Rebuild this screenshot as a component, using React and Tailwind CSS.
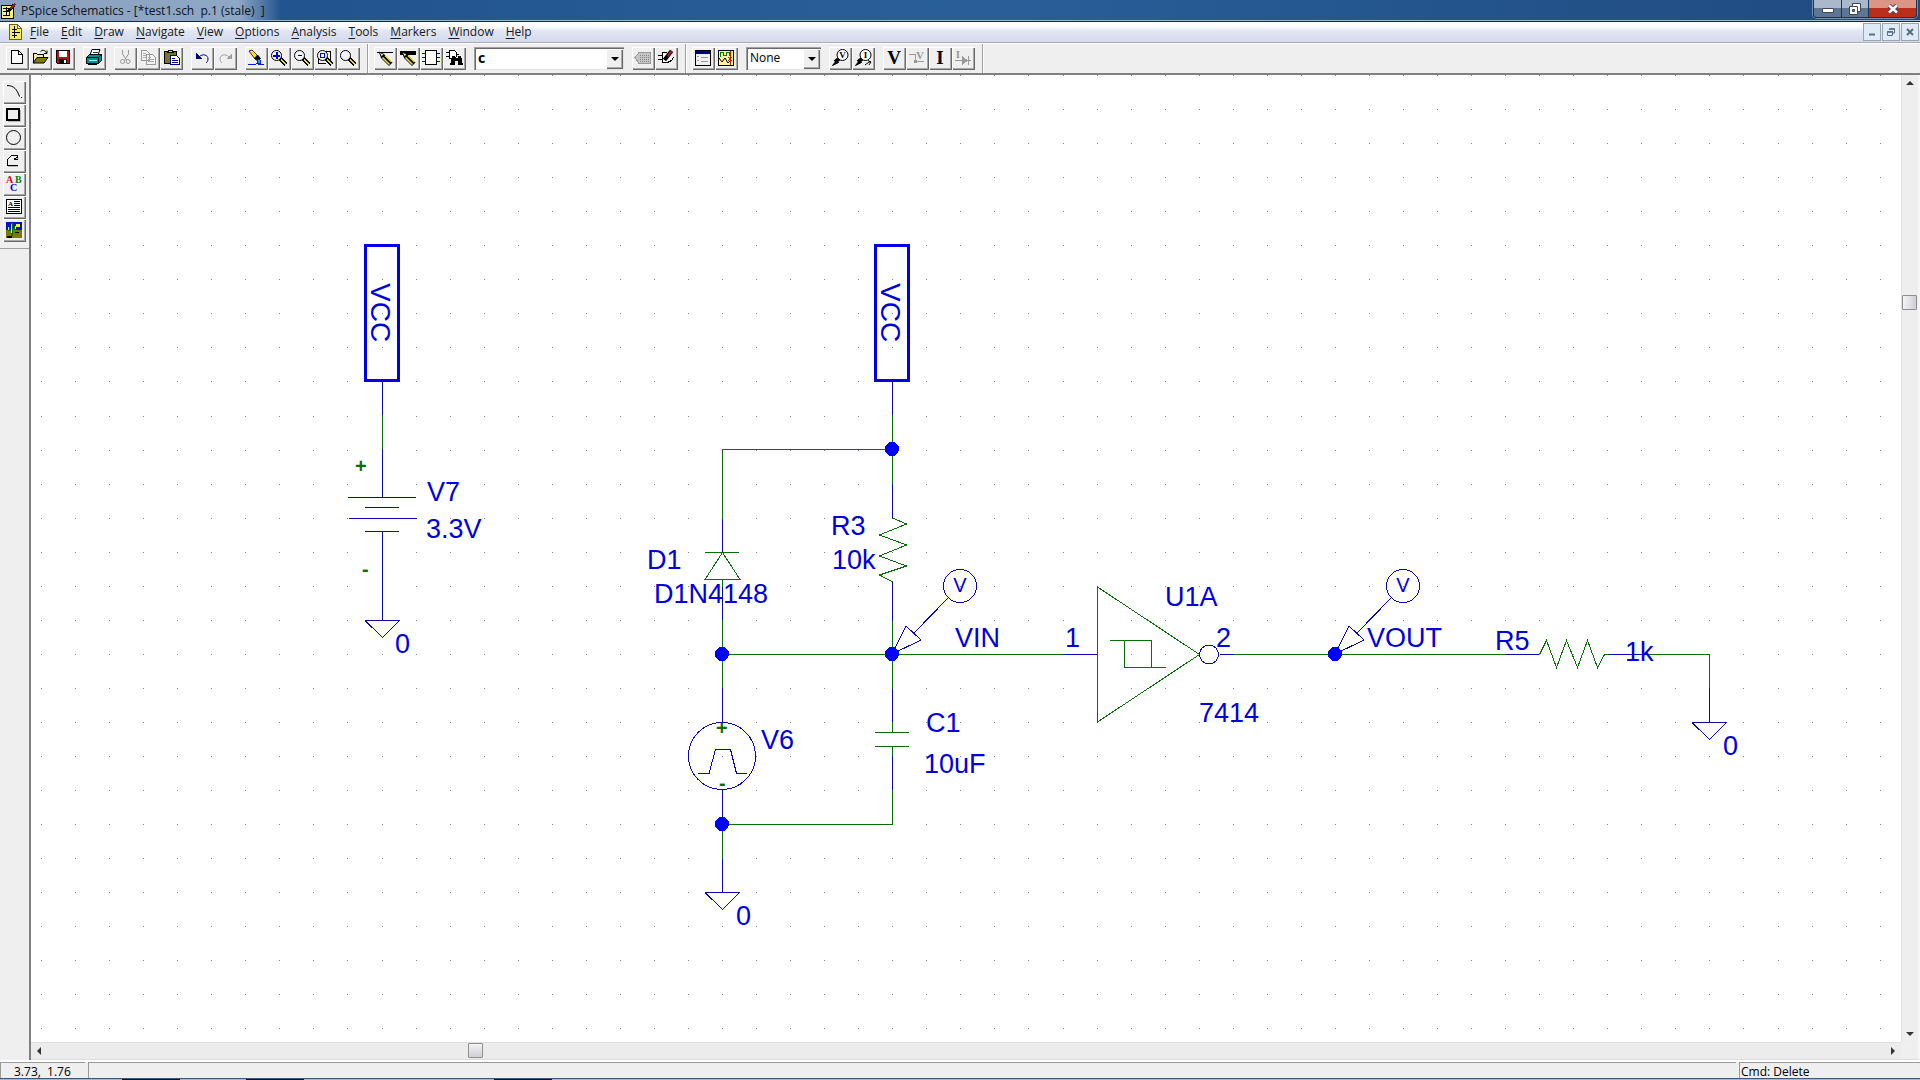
const UI_FONT = "font-['Open_Sans','Noto_Sans',sans-serif]";

const MENUS = ["File", "Edit", "Draw", "Navigate", "View", "Options", "Analysis", "Tools", "Markers", "Window", "Help"];

const GREEN = "#0b6e0b";
const WIRE = "#0a0aa8";
const LABEL = "#0000dc";

/* ---------- toolbar icons, all on a 23x23 grid ---------- */

function Icon({ children }) {
    return (
        <svg viewBox="0 0 23 23" className="block h-[23px] w-[23px]" shapeRendering="crispEdges" fill="none" stroke="#000" aria-hidden="true">
            {children}
        </svg>
    );
}

function Magnifier({ children }) {
    return (
        <Icon>
            <path d="M12 11.5l6 6" stroke="#000" strokeWidth="4" />
            <path d="M13 12.5l5 5" stroke="#e6dc50" strokeWidth="2" />
            <circle cx="8.5" cy="8.5" r="5" fill="#f4f4ff" shapeRendering="auto" />
            {children}
        </Icon>
    );
}

function Pencil({ thick }) {
    return (
        <Icon>
            <path d="M3 5.5h16" strokeWidth={thick ? 4 : 1} />
            <path d="M5 5l2 6 8 8 3.500-3.500-8-8z" fill="#000" stroke="none" shapeRendering="auto" />
            <path d="M8.500 10.500l7 7M11 8.500l6.500 6.500" stroke="#e6dc50" strokeWidth="1.600" shapeRendering="auto" />
            <path d="M5 5l5 2.500-2.500 2z" fill="#fff" strokeWidth=".8" shapeRendering="auto" />
        </Icon>
    );
}

function Probe({ letter, children }) {
    return (
        <Icon>
            <path d="M3.500 18.500l4-5 2 2z" fill="#000" shapeRendering="auto" />
            <path d="M6 15l5-4" strokeWidth="4" shapeRendering="auto" />
            <circle cx="13.500" cy="8" r="5.500" fill="#fff" shapeRendering="auto" />
            <text x="13.500" y="11" textAnchor="middle" fill="#000" stroke="none" className="font-['Liberation_Serif',serif] text-[9px] font-bold">{letter}</text>
            {children}
        </Icon>
    );
}

const icons = {
    new: (
        <Icon>
            <path d="M5.5 3.5h7l4 4v9h-11z" fill="#fff" />
            <path d="M12.5 3.5v4h4" />
        </Icon>
    ),
    open: (
        <Icon>
            <path d="M4.5 15.5v-9h3l1 1h6v3" fill="#f2ec9a" />
            <path d="M4 16l4-5.5h11L15 16z" fill="#7d7d00" shapeRendering="auto" />
            <path d="M11.5 4.5c2-2 5-1.5 6 1.5M18 3.5v3h-3" shapeRendering="auto" />
        </Icon>
    ),
    save: (
        <Icon>
            <path d="M4.5 3.5h13v13h-12l-1-1z" fill="#b01414" />
            <path d="M7 4h8v6H7z" fill="#fff" stroke="none" />
            <path d="M7 12h8v5H7z" fill="#000" stroke="none" />
            <path d="M12 13h2v3h-2z" fill="#fff" stroke="none" />
        </Icon>
    ),
    print: (
        <Icon>
            <path d="M7 8l2-5.5h8L15 8z" fill="#fff" shapeRendering="auto" />
            <path d="M9.5 5.5h5" strokeWidth=".8" />
            <path d="M3.5 10.5l3-3h12v6l-3 3h-12z" fill="#0c8c8c" shapeRendering="auto" />
            <path d="M3.5 10.5h12v6M15.5 10.5l3-3" shapeRendering="auto" />
            <path d="M5.5 13.5h8" stroke="#7ff" />
            <path d="M5 17.5h9" />
        </Icon>
    ),
    cut: (
        <Icon>
            <path d="M8.5 3v4l4 6M14.5 3v4l-4 6" stroke="#999" shapeRendering="auto" />
            <circle cx="8.5" cy="14.5" r="2" stroke="#999" shapeRendering="auto" />
            <circle cx="14" cy="14.5" r="2" stroke="#999" shapeRendering="auto" />
        </Icon>
    ),
    copy: (
        <Icon>
            <path d="M4.5 3.5h5l3 3v7h-8zM9.5 7.5h6l3 3v7h-9z" fill="#f3f3f3" stroke="#999" />
            <path d="M6 6.5h3M6 8.5h3M6 10.5h3M11 10.5h3M11 12.5h6M11 14.5h6" stroke="#aaa" />
        </Icon>
    ),
    paste: (
        <Icon>
            <path d="M4.5 4.5h12v12h-12z" fill="#77752a" />
            <path d="M7.5 5.5l1-2h4l1 2z" fill="#e8e080" />
            <path d="M10.5 8.5h6l3 3v6h-9z" fill="#fff" stroke="#00008c" />
            <path d="M12 11.5h3M12 13.5h6M12 15.5h6" stroke="#00008c" />
        </Icon>
    ),
    undo: (
        <Icon>
            <path d="M5 6v6h6z" fill="#00007c" stroke="none" />
            <path d="M8 10c4-4 9-2 9 2 0 2-1 3-2 4" stroke="#00007c" shapeRendering="auto" />
        </Icon>
    ),
    redo: (
        <Icon>
            <path d="M18 6v6h-6z" fill="#a0a0a0" stroke="none" />
            <path d="M15 10c-4-4-9-2-9 2 0 2 1 3 2 4" stroke="#a0a0a0" shapeRendering="auto" />
        </Icon>
    ),
    redraw: (
        <Icon>
            <path d="M4 4l3-1 6 6-3 3z" fill="#ffe21a" strokeWidth=".8" shapeRendering="auto" />
            <path d="M9.5 11.5l3-3.500 3 3.500-2.500 2.500z" fill="#000" shapeRendering="auto" />
            <path d="M12.500 12.500l2.500.5v3h-3z" fill="#18a0f0" stroke="#0018e0" />
            <path d="M3 17.5h8M13 17.5h6" stroke="#0018e0" />
        </Icon>
    ),
    zoomIn: <Magnifier><path d="M5 8.500h7M8.500 5v7" stroke="#0000d8" strokeWidth="2" /></Magnifier>,
    zoomOut: <Magnifier><path d="M7 8.500h4" stroke="#000080" /></Magnifier>,
    zoomArea: (
        <Magnifier>
            <path d="M6.500 6.500h4v4h-4z" stroke="#0000d8" fill="#fff" />
            <path d="M12 4.500h4v9M4.500 12v4h7" />
        </Magnifier>
    ),
    zoomFit: <Magnifier />,
    wire: <Pencil />,
    bus: <Pencil thick />,
    block: (
        <Icon>
            <path d="M5.5 3.5h11v14h-11z" fill="#fff" />
            <path d="M2 6.5h3M2 10.5h3M2 14.5h3M17 6.5h3M17 10.5h3M17 14.5h3" stroke="#0000c8" />
        </Icon>
    ),
    find: (
        <Icon>
            <path d="M3 5.5h3M3 9.5h3M6.5 3.5h4c4 0 4 8 0 8h-4zM13 7.5h3" fill="#fff" />
            <path d="M9 9h3v2h3V9h3l2 9h-5v-4h-3v4H7z" fill="#000" stroke="none" />
        </Icon>
    ),
    tag: (
        <Icon>
            <path d="M3 10.5l4-5h11v11H7z" fill="#c4c4c4" stroke="#999" />
            <path d="M8 8.5h9M8 10.5h9M8 12.5h9M8 14.5h9" stroke="#888" strokeDasharray="1 1" />
        </Icon>
    ),
    editSymbol: (
        <Icon>
            <path d="M3 8.5h4M3 12.5h4M7.5 5.5v10h3c6 0 7-3 8-5M7 5.5h5" fill="#fff" />
            <path d="M9.5 13l7-9" stroke="#000" strokeWidth="4" shapeRendering="auto" />
            <path d="M12.5 9.500l4.500-5.500" stroke="#a01428" strokeWidth="2.500" shapeRendering="auto" />
        </Icon>
    ),
    setup: (
        <Icon>
            <path d="M3.5 3.5h15v15h-15z" fill="#f0f0f0" />
            <path d="M4 5.5h14" stroke="#00008c" strokeWidth="3" />
            <path d="M5 9.5h2M9 10.5h7M5 13.5h2M9 14.5h7" stroke="#999" />
        </Icon>
    ),
    simulate: (
        <Icon>
            <path d="M3.5 3.5h15v15h-15z" fill="#fff79a" />
            <path d="M5 9.5V5.5h3v3h3v-3h3v3" stroke="#008000" />
            <path d="M4 11l3 4 3-4 3 5 3-3" shapeRendering="auto" />
            <path d="M15.5 4v14M13 10l4 4M17 10l-4 4" stroke="#c81414" />
        </Icon>
    ),
    probeV: <Probe letter="V" />,
    probeI: <Probe letter="I"><path d="M13 18l4-3h2M16 13.500l3 1.500-2 3" shapeRendering="auto" /></Probe>,
    voltage: (
        <Icon>
            <text x="11" y="17" textAnchor="middle" fill="#000" stroke="none" className="font-['Liberation_Serif',serif] text-[19px] font-bold">V</text>
        </Icon>
    ),
    netVoltage: (
        <Icon>
            <path d="M3 7.5h6v7h9M7.5 14.5h3" stroke="#999" />
            <circle cx="9.5" cy="14.5" r="1.5" fill="#999" stroke="none" />
            <text x="14" y="12" textAnchor="middle" fill="#999" stroke="none" className="font-['Liberation_Serif',serif] text-[11px] font-bold">V</text>
        </Icon>
    ),
    current: (
        <Icon>
            <text x="11" y="17" textAnchor="middle" fill="#000" stroke="none" className="font-['Liberation_Serif',serif] text-[19px] font-bold">I</text>
        </Icon>
    ),
    deviceCurrent: (
        <Icon>
            <path d="M3 13.5h16M16.5 9v9" stroke="#999" />
            <path d="M10 9l6 4.5-6 4.5z" fill="#999" stroke="none" />
            <text x="6" y="11" textAnchor="middle" fill="#999" stroke="none" className="font-['Liberation_Serif',serif] text-[11px] font-bold">I</text>
        </Icon>
    ),
    arc: <Icon><path d="M4 4.5c7 0 10 4 12.5 11M18 16.5h1" shapeRendering="auto" /></Icon>,
    box: (
        <Icon>
            <path d="M5 17.5h12.5V6" stroke="#bbb" />
            <path d="M4 5h12v11H4z" strokeWidth="2" />
        </Icon>
    ),
    circle: <Icon><circle cx="10.500" cy="10.500" r="7" shapeRendering="auto" /></Icon>,
    polyline: (
        <Icon>
            <path d="M5 16.500h10M12 8.500h4" stroke="#bbb" />
            <path d="M15 15.500H4.500v-6l4-4H14v2l-3 1.500h1l3 1" />
        </Icon>
    ),
    text: (
        <Icon>
            <g stroke="none" className="font-['Liberation_Serif',serif] text-[10px] font-bold">
                <text x="3" y="10" fill="#d01010">A</text>
                <text x="12" y="10" fill="#0a7a14">B</text>
                <text x="7" y="18" fill="#0000d0">C</text>
            </g>
        </Icon>
    ),
    textBox: (
        <Icon>
            <path d="M3.5 3.5h15v14h-15z" fill="#fff" />
            <path d="M11 5.5h6M11 7.5h6M11 9.5h6M5 11.5h12M5 13.5h12M5 15.5h12" />
            <text x="5" y="10" fill="#000" stroke="none" className="font-['Liberation_Serif',serif] text-[7px] font-bold">A</text>
        </Icon>
    ),
    picture: (
        <Icon>
            <path d="M3 3h16v8H3z" fill="#0014c8" stroke="none" />
            <path d="M3 11h16v8H3z" fill="#7d7a00" stroke="none" />
            <circle cx="15" cy="6.5" r="2" fill="#ffe84a" stroke="none" />
            <path d="M9 4v13M6 8v3h3M12 7v3h-3" stroke="#0a6e14" strokeWidth="2" />
            <path d="M8.500 5v9M5.500 8v3M12.500 7v3" stroke="#b8f0b8" />
            <path d="M4 17h5v2H4zM12 13h4v1h-4z" fill="#000" stroke="none" />
        </Icon>
    ),
};

function ToolButton({ name, label, disabled }) {
    return (
        <button
            type="button"
            aria-label={label}
            disabled={disabled}
            className="h-[23px] w-[23px] bg-[#efefef] shadow-[inset_1px_1px_#fff,inset_-1px_-1px_#696969,inset_-2px_-2px_#a8a8a8]"
        >
            {icons[name]}
        </button>
    );
}

function ToolGroup({ items }) {
    return (
        <div className="flex">
            {items.map(([name, label, disabled]) => (
                <ToolButton key={name} name={name} label={label} disabled={disabled} />
            ))}
        </div>
    );
}

function Combo({ label, value, className, textClass }) {
    return (
        <div className={`relative h-[23px] bg-white shadow-[inset_1px_1px_#a0a0a0,inset_2px_2px_#696969,inset_-1px_-1px_#e3e3e3] ${className}`}>
            <select aria-label={label} className={`block h-[21px] w-full appearance-none bg-transparent pl-1 text-black outline-none ${textClass}`}>
                <option>{value}</option>
            </select>
            <span className="pointer-events-none absolute top-[2px] right-px bottom-px flex w-[17px] items-center justify-center bg-[#efefef] shadow-[inset_1px_1px_#fff,inset_-1px_-1px_#696969,inset_-2px_-2px_#a8a8a8]">
                <svg viewBox="0 0 8 4" className="h-1 w-2" aria-hidden="true"><path d="M0 0h8L4 4z" /></svg>
            </span>
        </div>
    );
}

function ToolSection({ children }) {
    return (
        <div className="flex items-center gap-2 border-r border-[#a0a0a0] pr-[7px] pl-[6px] shadow-[1px_0_#fff]">
            {children}
        </div>
    );
}

function AppIcon() {
    return (
        <svg viewBox="0 0 16 16" className="h-4 w-4 shrink-0" shapeRendering="crispEdges" aria-hidden="true">
            <path d="M1 2h12v13H1z" fill="#f4ee8a" stroke="#000" />
            <path d="M3 5h7M3 8h4M9 8v5M3 12h7M6 4v9" stroke="#000" />
            <path d="M8 9l6-7" stroke="#000" strokeWidth="3" />
            <path d="M10 6l5-5" stroke="#8c1c1c" strokeWidth="2.500" />
        </svg>
    );
}

function DocIcon() {
    return (
        <svg viewBox="0 0 14 16" className="h-4 w-[14px] shrink-0" shapeRendering="crispEdges" aria-hidden="true">
            <path d="M1 .5h8l4 4v11H1z" fill="#f6ee58" stroke="#6a6400" />
            <path d="M9 .5v4h4" fill="#fff" stroke="#6a6400" />
            <path d="M6.5 2v12M4 5.5h5M4 8.5h8M4 11.5h5" stroke="#000" />
        </svg>
    );
}

function TitleBar() {
    const cap = "flex h-full items-center justify-center border-r border-[#1d3450] last:border-r-0";
    return (
        <header className="flex h-[22px] shrink-0 items-start border-b border-[#14284a] bg-linear-to-r from-[#1f4f8a] via-[#295f99] to-[#1f4a80] shadow-[inset_0_-1px_#9db6d4]">
            <div className="flex h-[21px] items-center gap-[5px] bg-linear-to-r from-[#8aa2bd] via-[#8ea7c6] via-85% to-transparent pr-4">
                <AppIcon />
                <h1 className="text-xs whitespace-pre text-[#0c1420]">PSpice Schematics - [*test1.sch  p.1 (stale)  ]</h1>
            </div>
            <div className="mr-[3px] ml-auto flex h-[18px] overflow-hidden rounded-b border border-t-0 border-[#1d3450] shadow-[0_0_0_1px_#ffffff60]">
                <button type="button" aria-label="Minimize" className={`${cap} w-7 bg-linear-to-b from-[#a9b8ca] from-45% to-[#5d7694] to-50%`}>
                    <svg viewBox="0 0 12 5" className="mt-1 h-[5px] w-3"><path d="M.5.5h11v4H.5z" fill="#fff" stroke="#445" /></svg>
                </button>
                <button type="button" aria-label="Restore" className={`${cap} w-[27px] bg-linear-to-b from-[#a9b8ca] from-45% to-[#5d7694] to-50%`}>
                    <svg viewBox="0 0 12 12" className="h-3 w-3" fill="#fff" stroke="#445"><path d="M3.5.5h8v8h-8z" /><path d="M.5 3.5h8v8h-8z" /><path d="M3.5 6.5h2v2h-2z" fill="#6a829e" /></svg>
                </button>
                <button type="button" aria-label="Close" className={`${cap} w-[47px] bg-linear-to-b from-[#dc9486] from-45% to-[#b8301c] to-50%`}>
                    <svg viewBox="0 0 12 10" className="h-[10px] w-3"><path d="M2 1.5l8 7M10 1.5l-8 7" stroke="#445" strokeWidth="4.5" /><path d="M2 1.5l8 7M10 1.5l-8 7" stroke="#fff" strokeWidth="2.5" /></svg>
                </button>
            </div>
        </header>
    );
}

function MenuBar() {
    const mdi = "flex h-[18px] w-[18px] items-center justify-center border border-[#9aa5b4] bg-[#dfeaf7]";
    return (
        <nav className="flex h-[21px] shrink-0 items-center border-b border-[#a9acb8] bg-linear-to-b from-white from-20% via-[#e2e6f3] via-45% to-[#d4daec] pl-2">
            <DocIcon />
            <ul className="ml-2 flex gap-3">
                {MENUS.map((m) => (
                    <li key={m}>
                        <button type="button" className="block text-xs text-[#1a1a1a]"><u className="underline-offset-2">{m[0]}</u>{m.slice(1)}</button>
                    </li>
                ))}
            </ul>
            <div className="mr-px ml-auto flex gap-px">
                <button type="button" aria-label="Minimize document" className={mdi}>
                    <svg viewBox="0 0 8 8" className="h-2 w-2"><path d="M1 6.5h6" stroke="#5a6c80" strokeWidth="2" /></svg>
                </button>
                <button type="button" aria-label="Restore document" className={mdi}>
                    <svg viewBox="0 0 8 8" className="h-2 w-2" fill="none" stroke="#5a6c80"><path d="M2.5 2V1h5v4H6M.5 3.5h5v4h-5z" /><path d="M2 1h6M0 4h6" strokeWidth="1.5" /></svg>
                </button>
                <button type="button" aria-label="Close document" className={mdi}>
                    <svg viewBox="0 0 8 8" className="h-2 w-2"><path d="M1 1l6 6M7 1L1 7" stroke="#5a6c80" strokeWidth="2" /></svg>
                </button>
            </div>
        </nav>
    );
}

function Toolbar() {
    return (
        <div role="toolbar" aria-label="Standard" className="flex h-8 shrink-0 border-t border-b-2 border-t-white border-b-[#808080] bg-[#efefef]">
            <ToolSection>
                <ToolGroup items={[["new", "New"], ["open", "Open"], ["save", "Save"]]} />
                <ToolGroup items={[["print", "Print"]]} />
                <ToolGroup items={[["cut", "Cut", true], ["copy", "Copy", true], ["paste", "Paste"]]} />
                <ToolGroup items={[["undo", "Undo"], ["redo", "Redo", true]]} />
                <ToolGroup items={[["redraw", "Redraw"], ["zoomIn", "Zoom in"], ["zoomOut", "Zoom out"], ["zoomArea", "Zoom area"], ["zoomFit", "Zoom to fit"]]} />
            </ToolSection>
            <ToolSection>
                <ToolGroup items={[["wire", "Draw wire"], ["bus", "Draw bus"], ["block", "Draw block"], ["find", "Get new part"]]} />
                <Combo label="Part" value="c" className="w-[150px]" textClass="text-sm font-bold" />
                <ToolGroup items={[["tag", "Edit attributes", true], ["editSymbol", "Edit symbol"]]} />
            </ToolSection>
            <ToolSection>
                <ToolGroup items={[["setup", "Setup analysis"], ["simulate", "Simulate"]]} />
                <Combo label="Marker color" value="None" className="w-[75px]" textClass="text-xs" />
                <ToolGroup items={[["probeV", "Voltage marker"], ["probeI", "Current marker"]]} />
                <ToolGroup items={[["voltage", "Show voltages"], ["netVoltage", "Show net voltage", true], ["current", "Show currents"], ["deviceCurrent", "Show device current", true]]} />
            </ToolSection>
        </div>
    );
}

function DrawBar() {
    const tools = [["arc", "Arc"], ["box", "Box"], ["circle", "Circle"], ["polyline", "Polyline"], ["text", "Text"], ["textBox", "Text box"], ["picture", "Picture"]];
    return (
        <aside className="w-[31px] shrink-0 border-r-2 border-[#808080] bg-[#efefef]">
            <div className="flex flex-col border-b border-[#a0a0a0] pt-[6px] pb-[6px] pl-[3px]">
                {tools.map(([name, label]) => <ToolButton key={name} name={name} label={label} />)}
            </div>
        </aside>
    );
}

/* ---------- schematic ---------- */

// 0.1" grid, pitch is slightly over 34px at this zoom
const PITCH = 34.05;
let gridPath = "";
for (let r = 0; r < 44; r++) {
    for (let c = 0; c < 76; c++) {
        gridPath += `M${Math.round(41 + c * PITCH)} ${Math.round(75 + r * PITCH)}.5h1`;
    }
}

const LABELS = [
    [427, 501, "V7"], [426, 538, "3.3V"], [395, 653, "0"],
    [831, 535, "R3"], [832, 569, "10k"], [647, 569, "D1"], [654, 603, "D1N4148"],
    [955, 647, "VIN"], [761, 749, "V6"], [736, 925, "0"],
    [926, 732, "C1"], [924, 773, "10uF"],
    [1065, 647, "1"], [1165, 606, "U1A"], [1216, 647, "2"], [1199, 722, "7414"],
    [1367, 647, "VOUT"], [1495, 650, "R5"], [1625, 661, "1k"], [1723, 755, "0"],
];

function Ground({ x, y }) {
    return <path d={`M${x - 17} ${y}.5h34M${x - 17} ${y}.5l17.5 17 17-17`} stroke={WIRE} />;
}

function Port({ x, y }) {
    return (
        <g>
            <rect x={x - 16.5} y={y + 1.5} width="33" height="135" stroke="#0000e4" strokeWidth="3" />
            <text transform={`translate(${x - 11} ${y + 39}) rotate(90)`} fill={LABEL} stroke="none" className="text-[28px]">VCC</text>
        </g>
    );
}

function VoltageMarker({ x, y }) {
    return (
        <g stroke={WIRE}>
            <circle cx={x + 68} cy={y - 68} r="16.5" />
            <path d={`M${x + 56} ${y - 56}L${x + 22} ${y - 21}M${x + 14} ${y - 28}l15 14L${x} ${y}z`} />
            <text x={x + 68} y={y - 62} textAnchor="middle" fill={LABEL} stroke="none" className="text-xl">V</text>
        </g>
    );
}

function Schematic() {
    return (
        <svg
            viewBox="31 75 2560 1440"
            width="2560"
            height="1440"
            className="absolute top-0 left-0 max-w-none font-['Liberation_Sans',Arial,sans-serif]"
            shapeRendering="crispEdges"
            fill="none"
            role="img"
            aria-label="Schematic sheet"
        >
            <path d={gridPath} stroke="#858585" />

            {/* wires */}
            <path
                stroke={GREEN}
                d="M382.5 415v34M892.5 415v69M722.5 519v-69.5h170M722.5 579v8M722.5 620v68M892.5 621v68M722 654.5h341
                M892.5 722v10M892.5 746v10M892.5 790v34.5h-170M722.5 824v35M1234 654.5h272M1641 654.5h68.5v34"
            />
            {/* pins */}
            <path
                stroke={WIRE}
                d="M382.5 382v33M382.5 449v48M348 497.5h68M365 507.5h34M349 518.5h68M365 531.5h34M382.5 531v89
                M892.5 382v33M892.5 484v34M892.5 582v39M892.5 689v33M892.5 756v34
                M722.5 519v33M722.5 587v33M722.5 688v34M722.5 790v34M722.5 859v33
                M1063 654.5h34M1220 654.5h14M1506 654.5h33M1608 654.5h33M1709.5 688v34"
            />
            {/* part bodies */}
            <path
                stroke={GREEN}
                d="M705 552.5h34M722.5 552.5L705 579.5h35z
                M892.5 518l14 6-27 11 27 10-27 11 27 10-27 9 13 7
                M875 732.5h34M875 746.5h34
                M1097.5 587v135l102-67.5z
                M1110 640.5h41.5v27M1124.5 640.5v27h41.5
                M1539.5 654.5l7-14 10 27 10-27 11 27 10-27 10 27 7-13h4"
            />
            <circle cx="722" cy="756" r="33.5" stroke={WIRE} />
            <path d="M698 773.5h11l6.5-24h15l6 24h10" stroke={WIRE} />
            <circle cx="1209" cy="654.5" r="9.5" stroke={WIRE} />

            <Port x={382} y={244} />
            <Port x={892} y={244} />
            <Ground x={382} y={620} />
            <Ground x={722} y={892} />
            <Ground x={1709} y={722} />
            <VoltageMarker x={892} y={654} />
            <VoltageMarker x={1335} y={654} />

            <g fill="#0000ff">
                {[[892, 449], [722, 654], [892, 654], [722, 824], [1335, 654]].map(([x, y]) => (
                    <circle key={`${x}-${y}`} cx={x} cy={y} r="7" />
                ))}
            </g>

            <g fill={GREEN} className="text-xl font-bold">
                <text x="355" y="473">+</text>
                <text x="362" y="576">-</text>
                <text x="716" y="735">+</text>
                <text x="719" y="790">-</text>
            </g>
            <g fill={LABEL} className="text-[27px]">
                {LABELS.map(([x, y, t]) => <text key={`${x}-${y}`} x={x} y={y}>{t}</text>)}
            </g>
        </svg>
    );
}

function Arrow({ d, label }) {
    return (
        <button type="button" aria-label={label} className="flex h-4 w-4 shrink-0 items-center justify-center">
            <svg viewBox="0 0 8 8" className="h-2 w-2" fill="#333" aria-hidden="true"><path d={d} /></svg>
        </button>
    );
}

function StatusBar() {
    const cell = "border-t border-l border-[#9a9a94]";
    return (
        <footer className="shrink-0 bg-[#efefef]">
            <div className="flex h-[18px] gap-[3px] border-t-2 border-white text-xs text-black">
                <div className={`${cell} w-[85px] pl-[13px] leading-[18px] whitespace-pre`}>3.73,  1.76</div>
                <div className={`${cell} flex-1`} />
                <div className={`${cell} w-[181px] pl-px leading-[18px]`}>Cmd: Delete</div>
            </div>
            <div className="flex h-[2px] border-t border-[#3c5878] bg-[#9fbad8]">
                <span className="w-[122px]" />
                <span className="w-[58px] bg-[#10151c]" />
                <span className="w-[66px]" />
                <span className="w-[58px] bg-[#10151c]" />
                <span className="w-[190px]" />
                <span className="w-[58px] bg-[#10151c]" />
            </div>
        </footer>
    );
}

export default function App() {
    return (
        <div className={`flex h-screen flex-col overflow-hidden bg-[#efefef] ${UI_FONT}`}>
            <TitleBar />
            <MenuBar />
            <Toolbar />
            <div className="flex min-h-0 flex-1">
                <DrawBar />
                <div className="flex min-w-0 flex-1 flex-col border-r-2 border-b border-r-[#f6f6f6] border-b-[#dcdcdc]">
                    <div className="flex min-h-0 flex-1">
                        <main className="relative min-w-0 flex-1 overflow-hidden bg-white">
                            <Schematic />
                        </main>
                        <div className="flex w-[17px] flex-col border-l border-[#e0e0e0] bg-[#eeeeee] pr-px">
                            <Arrow label="Scroll up" d="M0 6h8L4 2z" />
                            <div className="flex-[204]" />
                            <div className="h-[15px] rounded-[1px] border border-[#8e8f8f] bg-linear-to-r from-[#f4f4f4] to-[#cfcfd4]" />
                            <div className="flex-[715]" />
                            <Arrow label="Scroll down" d="M0 2h8L4 6z" />
                        </div>
                    </div>
                    <div className="mr-[17px] flex h-[17px] shrink-0 border-t border-[#e0e0e0] bg-[#ececec] pb-px">
                        <Arrow label="Scroll left" d="M6 0v8L2 4z" />
                        <div className="flex-[421]" />
                        <div className="w-[15px] rounded-[1px] border border-[#8e8f8f] bg-linear-to-b from-[#f4f4f4] to-[#cfcfd4]" />
                        <div className="flex-[1403]" />
                        <Arrow label="Scroll right" d="M2 0v8l4-4z" />
                    </div>
                </div>
            </div>
            <StatusBar />
        </div>
    );
}
